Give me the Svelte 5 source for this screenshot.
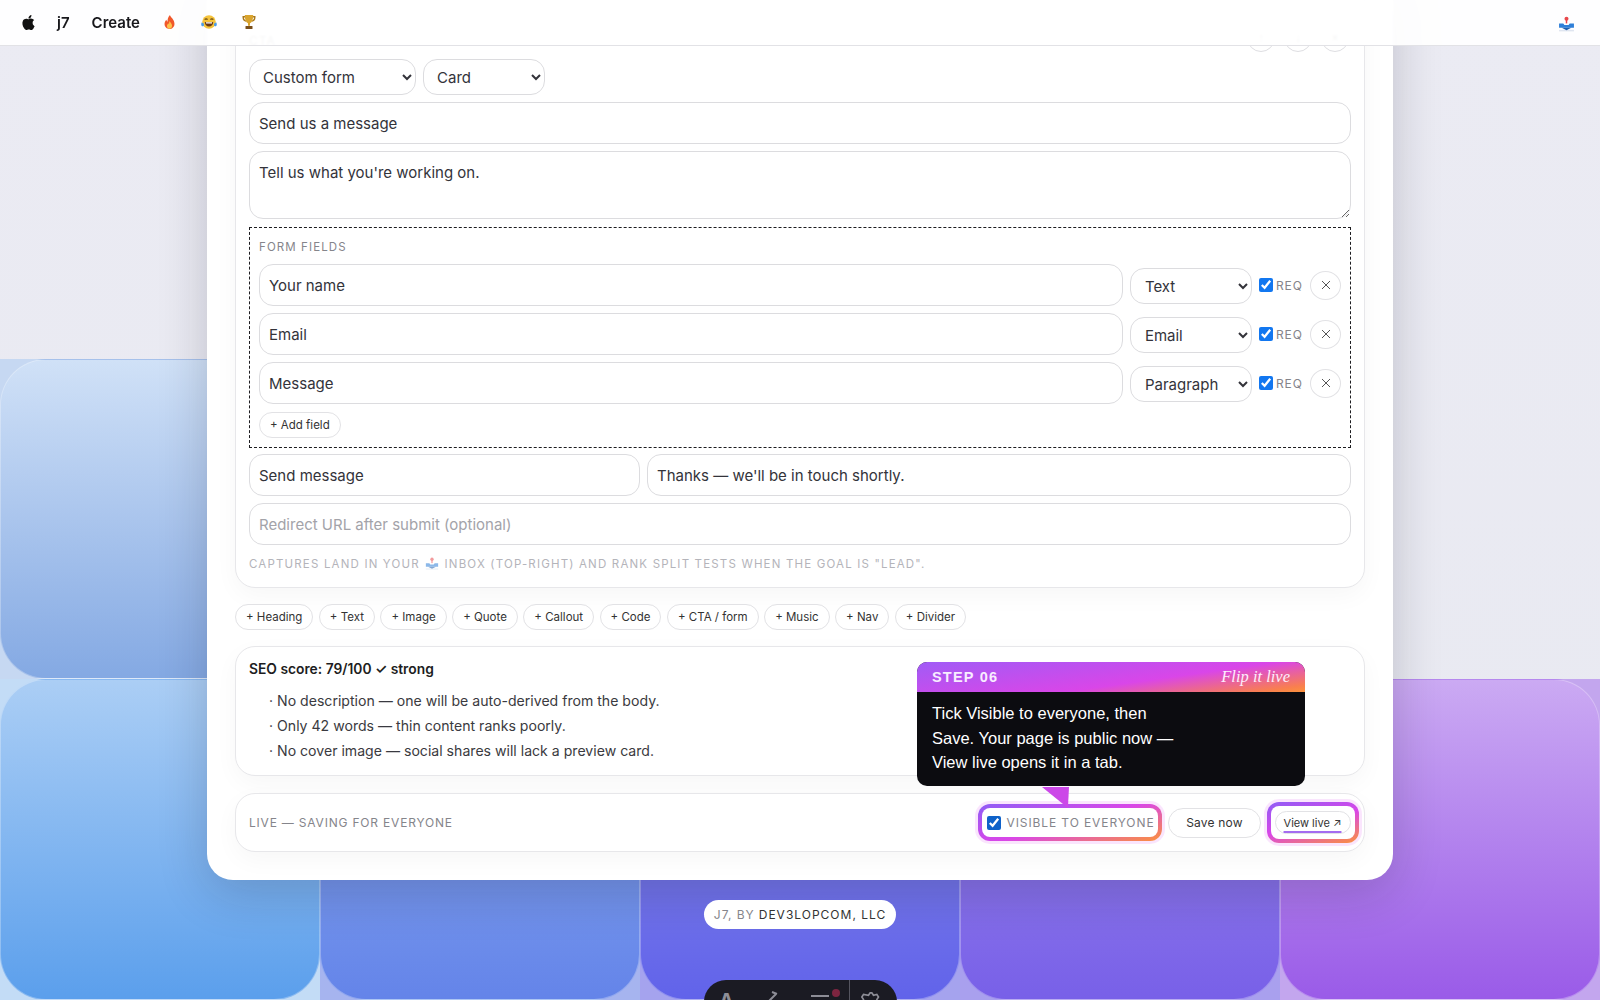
<script>
  const chips = ['Heading', 'Text', 'Image', 'Quote', 'Callout', 'Code', 'CTA / form', 'Music', 'Nav', 'Divider'];

  const fields = [
    { label: 'Your name', type: 'Text' },
    { label: 'Email', type: 'Email' },
    { label: 'Message', type: 'Paragraph' }
  ];

  const seoNotes = [
    'No description — one will be auto-derived from the body.',
    'Only 42 words — thin content ranks poorly.',
    'No cover image — social shares will lack a preview card.'
  ];

  let visible = true;
</script>

{#snippet inboxIcon(size)}
  <svg class="emoji" width={size} height={size} viewBox="0 0 16 16">
    <path d="M1 13h14v1.500H1z" fill="#dfe5f0" />
    <circle cx="8" cy="2.600" r="1.900" fill="#e8484c" />
    <rect x="7.300" y="3.500" width="1.400" height="3.500" fill="#e8484c" />
    <path d="M1 7h4l1 1.500h4l1-1.500h4v4H1z" fill="#2f7fd8" />
    <path d="M3.500 11h9L8 13.500z" fill="#1d5fb0" />
  </svg>
{/snippet}

<div class="page">
  <div class="backdrop">
    <div class="cell c0"><div class="tile"></div></div>
    <div class="cell"></div>
    <div class="cell"></div>
    <div class="cell"></div>
    <div class="cell"></div>
    <div class="cell c1"><div class="tile"></div></div>
    <div class="cell c2"><div class="tile"></div></div>
    <div class="cell c3"><div class="tile"></div></div>
    <div class="cell c4"><div class="tile"></div></div>
    <div class="cell c5"><div class="tile"></div></div>
  </div>

  <header class="menubar">
    <svg class="apple" width="15" height="17" viewBox="0 0 24 24" fill="#111">
      <path d="M12.152 6.896c-.948 0-2.415-1.078-3.96-1.04-2.04.027-3.91 1.183-4.961 3.014-2.117 3.675-.546 9.103 1.519 12.09 1.013 1.454 2.208 3.09 3.792 3.039 1.52-.065 2.09-.987 3.935-.987 1.831 0 2.35.987 3.96.948 1.637-.026 2.676-1.48 3.676-2.948 1.156-1.688 1.636-3.325 1.662-3.415-.039-.013-3.182-1.221-3.22-4.857-.026-3.04 2.48-4.494 2.597-4.559-1.429-2.09-3.623-2.324-4.39-2.376-2-.156-3.675 1.09-4.61 1.09zM15.53 3.83c.843-1.012 1.4-2.427 1.245-3.83-1.207.052-2.662.805-3.532 1.818-.78.896-1.454 2.338-1.273 3.714 1.338.104 2.715-.688 3.559-1.701" />
    </svg>
    <span class="brand">j7</span>
    <span class="create">Create</span>
    <svg class="emoji fire" width="15" height="16" viewBox="0 0 16 16">
      <path d="M8.500 0.500c.6 2.600 4.800 4.600 4.800 9.300 0 3.400-2.400 5.700-5.300 5.700s-5.300-2.200-5.300-5.300c0-2 1-3.500 2-4.500.2 1 .6 1.700 1.300 2.100C5.700 5 6.500 2.500 8.500.5z" fill="#f0582a" />
      <path d="M8.200 7c.3 1.500 2.500 2.600 2.500 5 0 2-1.200 3.300-2.700 3.300s-2.700-1.200-2.700-3c0-1.500 1-2.300 1.500-3 .2.500.4.800.7 1C7.500 9.200 7.600 8 8.200 7z" fill="#fdc24a" />
    </svg>
    <svg class="emoji laugh" width="16" height="16" viewBox="0 0 16 16">
      <circle cx="8" cy="8" r="6.800" fill="#f5c33b" />
      <path d="M3.600 5.500q1.500-1.300 3 0M9.400 5.500q1.500-1.300 3 0" fill="none" stroke="#6b4a12" stroke-width="1.100" />
      <path d="M3.800 8h8.400c0 2.800-1.800 4.600-4.200 4.600S3.800 10.800 3.800 8z" fill="#6b3a12" />
      <path d="M4.800 8.300h6.400l-.3 1.300H5.100z" fill="#fff" />
      <path d="M0.600 8.500c1.200 0 2.400.8 2.400 2.200 0 1-.8 1.600-1.500 1.600S.2 11.500.2 10.500c0-.700.200-1.400.4-2zM15.400 8.500c-1.200 0-2.400.8-2.400 2.200 0 1 .8 1.600 1.500 1.600s1.300-.8 1.300-1.800c0-.700-.200-1.400-.4-2z" fill="#4a9ce8" />
    </svg>
    <svg class="emoji trophy" width="16" height="16" viewBox="0 0 16 16">
      <path d="M1.500 2h13v1.500c0 2.500-1.500 4-3.500 4.200l-.5-1.300c1.500-.2 2.500-1.200 2.500-3H3c0 1.800 1 2.800 2.500 3L5 7.700C3 7.500 1.500 6 1.500 3.500z" fill="#a9791c" />
      <path d="M3.800 1h8.400c0 4.500-1 7.300-3.200 8.300v2.400H7V9.300C4.800 8.300 3.800 5.500 3.800 1z" fill="#d9a42e" />
      <rect x="4.500" y="12" width="7" height="3" rx=".5" fill="#7a4f1a" />
    </svg>
    <span class="inbox">{@render inboxIcon(17)}</span>
  </header>

  <div class="window">
    <section class="card block">
      <div class="block-head">
        <span class="block-name">CTA</span>
        <div class="block-tools">
          <button>↑</button>
          <button>↓</button>
          <button>×</button>
        </div>
      </div>

      <div class="select-row">
        <select class="goal">
          <option>Custom form</option>
        </select>
        <select class="layout">
          <option>Card</option>
        </select>
      </div>

      <input class="input" value="Send us a message" />
      <textarea class="input body">Tell us what you're working on.</textarea>

      <div class="form-fields">
        <div class="small-label">FORM FIELDS</div>
        {#each fields as field}
          <div class="field-row">
            <input class="input" value={field.label} />
            <select class="field-type">
              <option>{field.type}</option>
            </select>
            <label class="req"><input type="checkbox" checked /> REQ</label>
            <button class="remove" aria-label="Remove">
              <svg width="10" height="10" viewBox="0 0 10 10"><path d="M1 1l8 8M9 1l-8 8" stroke="#555" stroke-width="1" fill="none" /></svg>
            </button>
          </div>
        {/each}
        <button class="chip add">+ Add field</button>
      </div>

      <div class="submit-row">
        <input class="input" value="Send message" />
        <input class="input" value="Thanks — we'll be in touch shortly." />
      </div>
      <input class="input" placeholder="Redirect URL after submit (optional)" />
      <p class="caption">Captures land in your <span class="caption-icon">{@render inboxIcon(14)}</span> inbox (top-right) and rank split tests when the goal is "lead".</p>
    </section>

    <div class="chips">
      {#each chips as chip}
        <button class="chip">+ {chip}</button>
      {/each}
    </div>

    <section class="card seo">
      <div class="seo-title">SEO score: 79/100 ✓ strong</div>
      <ul>
        {#each seoNotes as note}
          <li>· {note}</li>
        {/each}
      </ul>
    </section>

    <section class="card savebar">
      <span class="status">LIVE — SAVING FOR EVERYONE</span>
      <div class="actions">
        <label class="spot visible">
          <input type="checkbox" bind:checked={visible} />
          VISIBLE TO EVERYONE
        </label>
        <button class="save">Save now</button>
        <div class="spot live">
          <button class="view">View live ↗</button>
        </div>
      </div>
    </section>
  </div>

  <div class="credit">
    <span>J7, BY <b>DEV3LOPCOM, LLC</b></span>
  </div>

  <aside class="tooltip">
    <div class="tooltip-head">
      <strong>STEP 06</strong>
      <em>Flip it live</em>
    </div>
    <p>Tick Visible to everyone, then<br />Save. Your page is public now —<br />View live opens it in a tab.</p>
  </aside>

  <div class="dock">
    <span class="dock-a">A</span>
    <svg class="dock-horn" width="26" height="20" viewBox="0 0 26 20" fill="none" stroke="#8d8d96" stroke-width="2">
      <path d="M4 12L13 3M9 1l5 2M4 12l20 5" />
    </svg>
    <span class="dock-lines"></span>
    <span class="dock-dot"></span>
    <span class="dock-sep"></span>
    <svg class="dock-gear" width="24" height="20" viewBox="0 0 24 24" fill="none" stroke="#8d8d96" stroke-width="2">
      <path d="M9 4l2-3h2l2 3 4-1 2 3-2 3 2 4-3 3-4-1-2 3h-2l-2-3-4 1-3-3 2-4-2-3 2-3z" />
    </svg>
  </div>
</div>

<style>
  :global(body) {
    margin: 0;
    background: #e9eaf1;
  }

  .page {
    position: relative;
    height: 1000px;
    overflow: hidden;
    font-family: Inter, "Liberation Sans", sans-serif;
    color: #33333a;
    background: linear-gradient(180deg, #ebebf3 0%, #e8e9f1 100%);
  }

  .backdrop {
    position: absolute;
    left: 0;
    top: 359px;
    display: grid;
    grid-template-columns: repeat(5, 320px);
    grid-template-rows: 320px 321px;
  }

  .cell.c0 { background: #c6d8f2; }
  .cell.c1 { background: #c3dcf6; }
  .cell.c2 { background: #a6b4ef; }
  .cell.c3 { background: #a5a3ee; }
  .cell.c4 { background: #a9a0ee; }
  .cell.c5 { background: #c3a6ee; }

  .tile {
    height: 100%;
    box-sizing: border-box;
    border-radius: 46px;
    border: 1px solid rgba(255, 255, 255, 0.28);
  }

  .c0 .tile { background: linear-gradient(180deg, #d0e1f7 0%, #84a9e3 100%); }
  .c1 .tile { background: linear-gradient(180deg, #abcef5 0%, #5b9fec 100%); }
  .c2 .tile { background: linear-gradient(180deg, #8eb0f0 0%, #6484e9 100%); }
  .c3 .tile { background: linear-gradient(180deg, #8f90ea 0%, #6163ea 100%); }
  .c4 .tile { background: linear-gradient(180deg, #a08ded 0%, #7860e8 100%); }
  .c5 .tile { background: linear-gradient(180deg, #cbaaf3 0%, #9a5be8 100%); }

  .menubar {
    position: absolute;
    z-index: 3;
    left: 0;
    right: 0;
    top: 0;
    height: 46px;
    box-sizing: border-box;
    display: flex;
    align-items: center;
    padding: 0 25px 1px 21px;
    background: rgba(255, 255, 255, 0.93);
    backdrop-filter: blur(1px);
    border-bottom: 1px solid #e2e2e6;
  }

  .brand {
    margin-left: 21px;
    font-size: 15px;
    font-weight: 600;
    color: #18181c;
  }

  .create {
    margin-left: 22px;
    font-size: 15px;
    font-weight: 600;
    color: #18181c;
  }

  .emoji {
    display: inline-block;
    vertical-align: -3px;
  }

  .fire { margin-left: 22px; }
  .laugh { margin-left: 24px; }
  .trophy { margin-left: 24px; }
  .inbox { margin-left: auto; height: 17px; }

  .window {
    position: relative;
    box-sizing: border-box;
    width: 1186px;
    margin: -21px auto 0;
    padding: 0 28px 28px;
    background: #fff;
    border-radius: 0 0 26px 26px;
    box-shadow: 0 12px 50px rgba(20, 20, 40, 0.2);
  }

  .card {
    background: #fff;
    border: 1px solid #e7e7ea;
    border-radius: 20px;
    box-shadow: 0 8px 24px rgba(0, 0, 0, 0.035);
  }

  .block {
    box-sizing: border-box;
    height: 609px;
    padding: 43px 13px 0;
    display: flex;
    flex-direction: column;
    gap: 7px;
  }

  .block-head {
    display: flex;
    justify-content: space-between;
    align-items: center;
    height: 29px;
  }

  .block-name {
    padding-top: 6px;
    font-size: 12px;
    letter-spacing: 1px;
    color: #888;
  }

  .block-tools {
    display: flex;
    gap: 9px;
    padding-right: 2px;
  }

  .block-tools button {
    width: 28px;
    height: 28px;
    padding: 0;
    border: 1px solid #dedee2;
    border-radius: 50%;
    background: #fff;
    font-size: 12px;
    color: #777;
  }

  .select-row {
    display: flex;
    gap: 7px;
  }

  select {
    height: 36px;
    box-sizing: border-box;
    padding: 0 6px 0 9px;
    border: 1.5px solid #dcdcdf;
    border-radius: 14px;
    background-color: #fff;
    font-family: inherit;
    font-size: 15px;
    color: #33333a;
  }

  .goal { width: 167px; }
  .layout { width: 122px; }

  .input {
    display: block;
    width: 100%;
    height: 42px;
    box-sizing: border-box;
    padding: 0 9px;
    border: 1.5px solid #dcdcdf;
    border-radius: 14px;
    background: #fff;
    font-family: inherit;
    font-size: 15px;
    color: #33333a;
    outline: none;
  }

  .input::placeholder {
    color: #a3a3a9;
  }

  .body {
    height: 68px;
    padding-top: 11px;
    line-height: 20px;
    resize: vertical;
  }

  .form-fields {
    box-sizing: border-box;
    height: 221px;
    margin-top: 1px;
    padding: 11px 9px 0;
    border: 1px dashed #1c1c1f;
    display: flex;
    flex-direction: column;
    gap: 7px;
  }

  .small-label {
    font-size: 11.500px;
    line-height: 16px;
    letter-spacing: 1.100px;
    color: #85858b;
    margin-bottom: 2px;
  }

  .field-row {
    display: flex;
    align-items: center;
    gap: 7px;
  }

  .field-row .input {
    flex: 1;
    width: auto;
    min-width: 0;
  }

  .field-type {
    width: 122px;
    flex: none;
    margin-top: 2px;
    padding-left: 10px;
  }

  .req {
    display: flex;
    align-items: center;
    gap: 3px;
    font-size: 12px;
    letter-spacing: 1px;
    color: #85858b;
  }

  .req input,
  .visible input {
    margin: 0;
    width: 14px;
    height: 14px;
    accent-color: #1277f0;
  }

  .remove {
    display: flex;
    align-items: center;
    justify-content: center;
    width: 31px;
    height: 29px;
    padding: 0;
    border: 1px solid #e2e2e5;
    border-radius: 50%;
    background: #fff;
  }

  .chip {
    height: 26px;
    padding: 0 10px;
    border: 1px solid #e2e2e5;
    border-radius: 13px;
    background: #fff;
    font-family: inherit;
    font-size: 11.500px;
    font-weight: 400;
    color: #333;
    white-space: nowrap;
  }

  .add {
    align-self: flex-start;
    margin-top: 1px;
  }

  .submit-row {
    display: grid;
    grid-template-columns: 391px 1fr;
    gap: 7px;
    margin-top: -1px;
  }

  .caption {
    margin: 4px 0 0;
    font-size: 11.500px;
    line-height: 16px;
    letter-spacing: 1.170px;
    text-transform: uppercase;
    color: #b4b4ba;
  }

  .caption-icon {
    margin: 0 1px;
    opacity: 0.55;
  }

  .chips {
    display: flex;
    gap: 5.500px;
    margin-top: 16px;
  }

  .seo {
    box-sizing: border-box;
    height: 130px;
    margin-top: 16px;
    padding: 13px 13px 0;
  }

  .seo-title {
    font-size: 13.800px;
    line-height: 18px;
    font-weight: 600;
    color: #1d1d21;
  }

  .seo ul {
    list-style: none;
    margin: 10px 0 0;
    padding: 0 0 0 20px;
    font-size: 14.100px;
    line-height: 25px;
    color: #3a3a40;
  }

  .savebar {
    box-sizing: border-box;
    height: 59px;
    margin-top: 17px;
    padding: 0 13px;
    display: flex;
    align-items: center;
    justify-content: space-between;
  }

  .status {
    font-size: 12px;
    letter-spacing: 0.800px;
    color: #85858b;
  }

  .actions {
    display: flex;
    align-items: center;
    gap: 6px;
    margin-right: -8px;
  }

  .spot {
    box-sizing: border-box;
    border: 4.500px solid transparent;
    border-radius: 12px;
    background:
      linear-gradient(#fff, #fff) padding-box,
      linear-gradient(165deg, #8f5cf6 0%, #d946e8 50%, #fb923c 100%) border-box;
    box-shadow: 0 0 0 3px rgba(217, 70, 239, 0.14);
  }

  .visible {
    display: flex;
    align-items: center;
    gap: 6px;
    height: 37px;
    width: 184px;
    padding-left: 4.500px;
    font-size: 12px;
    letter-spacing: 0.900px;
    color: #85858b;
    white-space: nowrap;
  }

  .visible input {
    accent-color: #0f62c9;
  }

  .live {
    height: 41px;
    width: 92px;
    padding: 4.500px 3.500px;
  }

  .save,
  .view {
    border: 1px solid #e2e2e5;
    background: #fff;
    font-family: inherit;
    font-weight: 400;
    color: #333;
    white-space: nowrap;
  }

  .save {
    width: 93px;
    height: 30px;
    border-radius: 15px;
    font-size: 12px;
    letter-spacing: 0.200px;
  }

  .view {
    display: block;
    width: 76px;
    height: 23px;
    padding: 1px 0 0;
    border-radius: 12px;
    font-size: 11px;
    text-decoration: underline;
    text-decoration-color: #a46cf0;
    text-decoration-thickness: 2px;
    text-underline-offset: 4px;
  }

  .credit {
    position: relative;
    display: flex;
    justify-content: center;
    margin-top: 20px;
  }

  .credit span {
    height: 29px;
    padding: 0 10px;
    display: flex;
    align-items: center;
    gap: 4px;
    border-radius: 15px;
    background: #fff;
    font-size: 12px;
    letter-spacing: 1px;
    color: #85858b;
  }

  .credit b {
    font-weight: 400;
    color: #333;
  }

  .tooltip {
    position: absolute;
    z-index: 2;
    left: 917px;
    top: 662px;
    width: 388px;
    border-radius: 10px;
    background: #0c0c10;
    font-family: "Liberation Sans", Arial, sans-serif;
    color: #fff;
  }

  .tooltip::after {
    content: "";
    position: absolute;
    left: 125px;
    top: 125px;
    width: 27px;
    height: 21px;
    background: #cc48e8;
    clip-path: polygon(0 0, 100% 0, 96% 100%);
  }

  .tooltip-head {
    height: 30px;
    padding: 0 15px;
    display: flex;
    align-items: center;
    justify-content: space-between;
    border-radius: 10px 10px 0 0;
    background: linear-gradient(172deg, #a05cf6 0%, #d946e8 60%, #f97f4f 92%, #fb923c 100%);
  }

  .tooltip-head strong {
    font-size: 14.500px;
    letter-spacing: 1.200px;
    color: #f8ecff;
  }

  .tooltip-head em {
    font-family: "Liberation Serif", serif;
    font-size: 16.500px;
    color: #fdeefc;
  }

  .tooltip p {
    margin: 0;
    padding: 9px 15px 11px;
    font-size: 16.500px;
    line-height: 24.500px;
  }

  .dock {
    position: absolute;
    z-index: 2;
    left: 704px;
    top: 980px;
    width: 193px;
    height: 40px;
    border-radius: 22px 22px 0 0;
    background: #1b1b23;
    overflow: hidden;
  }

  .dock-a {
    position: absolute;
    left: 15px;
    top: 9px;
    font-size: 20px;
    font-weight: 700;
    color: #8d8d96;
  }

  .dock-horn {
    position: absolute;
    left: 59px;
    top: 11px;
  }

  .dock-lines {
    position: absolute;
    left: 107px;
    top: 15px;
    width: 18px;
    height: 2px;
    background: #8d8d96;
  }

  .dock-dot {
    position: absolute;
    left: 128px;
    top: 9px;
    width: 8px;
    height: 8px;
    border-radius: 50%;
    background: #7d2540;
  }

  .dock-sep {
    position: absolute;
    left: 145px;
    top: 0;
    width: 1px;
    height: 40px;
    background: #55555f;
  }

  .dock-gear {
    position: absolute;
    left: 155px;
    top: 12px;
  }
</style>
